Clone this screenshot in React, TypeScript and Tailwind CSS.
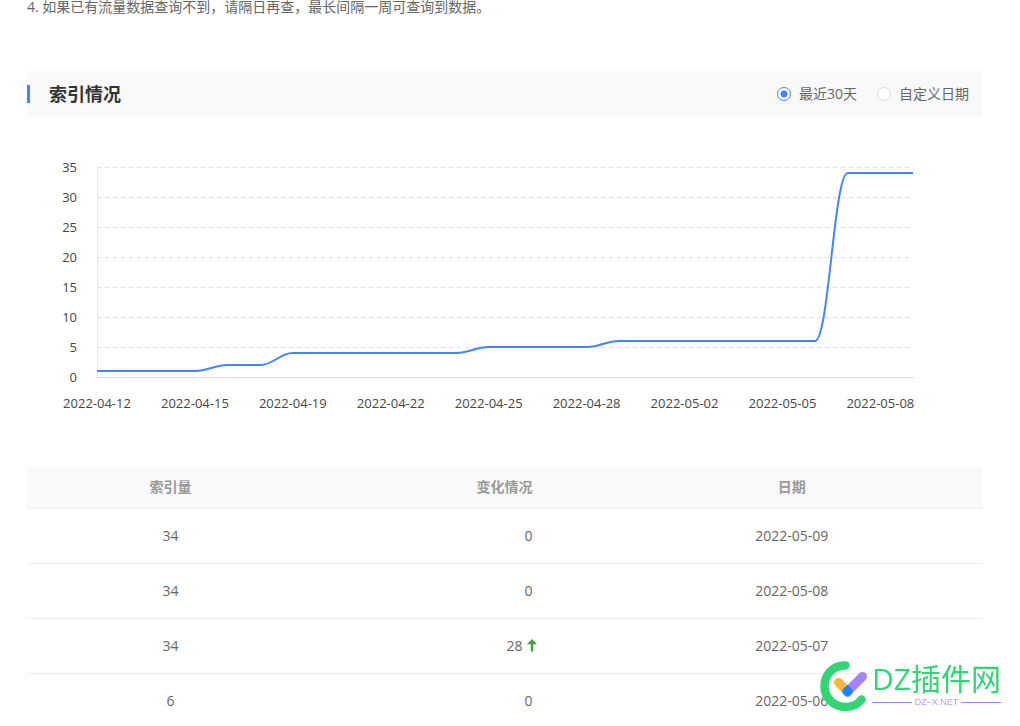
import React, { useState } from "react";

const dateLabels = [
  "2022-04-12",
  "2022-04-15",
  "2022-04-19",
  "2022-04-22",
  "2022-04-25",
  "2022-04-28",
  "2022-05-02",
  "2022-05-05",
  "2022-05-08",
];

const values = [
  1, 1, 1, 1, 2, 2, 4, 4, 4, 4, 4, 4, 5, 5, 5, 5, 6, 6, 6, 6, 6, 6, 6, 34, 34, 34,
];

const rows = [
  { count: 34, change: 0, date: "2022-05-09" },
  { count: 34, change: 0, date: "2022-05-08" },
  { count: 34, change: 28, date: "2022-05-07" },
  { count: 6, change: 0, date: "2022-05-06" },
];

const ranges = [
  { id: "recent", label: "最近30天" },
  { id: "custom", label: "自定义日期" },
];

const LEFT = 70;
const RIGHT = 886;
const BOTTOM = 220;
const STEP = (RIGHT - LEFT) / (values.length - 1);

const buildLine = () => {
  const bend = STEP * 0.42;
  let d = "";
  values.forEach((value, i) => {
    const x = LEFT + i * STEP;
    const y = BOTTOM - value * 6;
    if (i === 0) {
      d = `M${x} ${y}`;
      return;
    }
    const prevY = BOTTOM - values[i - 1] * 6;
    d += ` C${x - STEP + bend} ${prevY} ${x - bend} ${y} ${x} ${y}`;
  });
  return d;
};

const IndexChart = () => {
  return (
    <svg viewBox="0 0 956 270" className="block w-full" role="img" aria-label="索引情况">
      {[35, 30, 25, 20, 15, 10, 5].map((tick) => (
        <line
          key={tick}
          x1={LEFT}
          x2={RIGHT}
          y1={BOTTOM - tick * 6 + 0.5}
          y2={BOTTOM - tick * 6 + 0.5}
          stroke="#dddddd"
          strokeDasharray="4 4"
        />
      ))}
      <path d="M70.5 10V220" stroke="#e8e8e8" />
      <path d="M69 220.5H887" stroke="#d9d9d9" />
      <path d={buildLine()} fill="none" stroke="#4285ff" strokeWidth="2" />
      <g fill="#464646" fontSize="13">
        {[35, 30, 25, 20, 15, 10, 5, 0].map((tick) => (
          <text key={tick} x="50" y={BOTTOM - tick * 6 + 5} textAnchor="end">
            {tick}
          </text>
        ))}
        {dateLabels.map((label, i) => (
          <text key={label} x={LEFT + i * STEP * 3} y="251" textAnchor="middle">
            {label}
          </text>
        ))}
      </g>
    </svg>
  );
};

const UpArrow = () => {
  return (
    <svg width="10" height="13" viewBox="0 0 10 13" className="ml-1 inline-block align-[-1px]">
      <path d="M5 0L10 5.2H6.2V12.5H3.8V5.2H0Z" fill="#43a047" />
    </svg>
  );
};

const Watermark = () => {
  return (
    <div className="pointer-events-none fixed right-[19px] bottom-[14px] flex items-start">
      <svg width="52" height="52" viewBox="0 0 52 52" fill="none" strokeLinecap="round">
        <path d="M25.5 5.5C13 5 4.5 15 4.5 26C4.5 38 14 47 25.5 47C32.5 47 38 44 41.5 39.5" stroke="#32d573" strokeWidth="8.5" />
        <path d="M18.5 22.5L27 31" stroke="#ffb53e" strokeWidth="9" />
        <path d="M42.5 16.5L28 31" stroke="#a682ff" strokeWidth="9" />
        <path d="M27.5 25.5L31 28.5A4.6 4.6 0 1 1 24 28.5Z" fill="#1687ff" stroke="#1687ff" strokeWidth="1" />
      </svg>
      <div>
        <div className="text-[30px] leading-[38px] text-[#32d573]">DZ插件网</div>
        <div className="flex items-center gap-[3px] font-['Liberation_Sans',sans-serif] text-[9px] leading-2 text-[#b79aff]">
          <span className="h-px flex-1 bg-[#a682ff]" />
          DZ–X.NET
          <span className="h-px flex-1 bg-[#a682ff]" />
        </div>
      </div>
    </div>
  );
};

const App = () => {
  const [range, setRange] = useState("recent");

  return (
    <div className="h-screen overflow-hidden bg-white pr-[37px] pl-[27px] font-['Open_Sans','Noto_Sans_CJK_SC',sans-serif] text-sm text-[#666]">
      <p className="h-[71px] leading-[14px]">
        4. 如果已有流量数据查询不到，请隔日再查，最长间隔一周可查询到数据。
      </p>

      <div className="flex h-[46px] items-center justify-between bg-[#f9f9f9] pr-[14px]">
        <h2 className="flex items-center gap-[19px] text-lg font-bold text-[#333]">
          <span className="h-[18px] w-[3px] bg-[#4285ff]" />
          索引情况
        </h2>
        <div className="flex gap-5">
          {ranges.map((item) => (
            <label key={item.id} className="flex items-center gap-2">
              <input
                type="radio"
                name="range"
                value={item.id}
                checked={range === item.id}
                onChange={() => setRange(item.id)}
                className="size-[14px] appearance-none rounded-full border border-[#ddd] bg-white checked:border-[#4285ff] checked:bg-[radial-gradient(circle,#4285ff_3px,white_4px)]"
              />
              {item.label}
            </label>
          ))}
        </div>
      </div>

      <div className="pt-10 pb-10">
        <IndexChart />
      </div>

      <table className="w-full table-fixed border-separate border-spacing-0 text-center">
        <thead>
          <tr className="h-[42px] bg-[#f9f9f9] text-[#999]">
            <th className="w-[30%] border-b border-[#eee] pb-0.5 font-bold">索引量</th>
            <th className="w-[30%] border-b border-[#eee] pr-17 pb-0.5 text-right font-bold">变化情况</th>
            <th className="w-[40%] border-b border-[#eee] pb-0.5 font-bold">日期</th>
          </tr>
        </thead>
        <tbody>
          {rows.map((row) => (
            <tr key={row.date} className="h-[55px]">
              <td className="border-b border-[#eee]">{row.count}</td>
              <td className={row.change > 0 ? "border-b border-[#eee] pr-16 text-right" : "border-b border-[#eee] pr-17 text-right"}>
                {row.change}
                {row.change > 0 && <UpArrow />}
              </td>
              <td className="border-b border-[#eee]">{row.date}</td>
            </tr>
          ))}
        </tbody>
      </table>

      <Watermark />
    </div>
  );
};

export default App;
